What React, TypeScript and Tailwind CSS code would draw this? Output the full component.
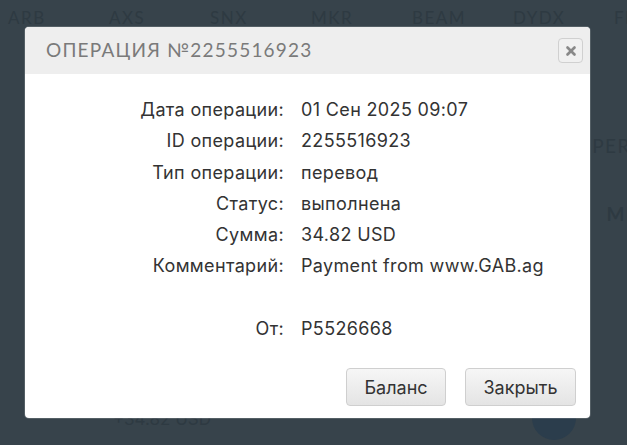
import { X } from "lucide-react";

const rows: [string, string][] = [
  ["Дата операции:", "01 Сен 2025 09:07"],
  ["ID операции:", "2255516923"],
  ["Тип операции:", "перевод"],
  ["Статус:", "выполнена"],
  ["Сумма:", "34.82 USD"],
  ["Комментарий:", "Payment from www.GAB.ag"],
  ["", ""],
  ["От:", "P5526668"],
];

const tickers = ["ARB", "AXS", "SNX", "MKR", "BEAM", "DYDX", "FE"];

export default function App() {
  return (
    <div className="relative w-[627px] h-[445px] overflow-hidden bg-[#37434b] font-['Inter','Liberation_Sans',sans-serif]">
      {/* page behind the overlay */}
      <div className="flex flex-col h-full text-[#2e3a42]">
        <div className="flex pl-[8px] pt-[5px] text-[17px] tracking-[1.5px] font-['Lato',sans-serif]">
          {tickers.map((t) => (
            <span key={t} className="w-[101px] shrink-0">{t}</span>
          ))}
        </div>
        <div className="flex justify-end pt-[101px] text-[19px] tracking-[1.5px] font-['Lato',sans-serif]">
          <span className="-mr-[4px]">PER</span>
        </div>
        <div className="flex justify-end pt-[40px] text-[19px] tracking-[1.5px] font-['Lato',sans-serif]">
          <span className="-mr-[6px] font-bold">MI</span>
        </div>
        <div className="mt-auto flex items-end justify-between pl-[113px] pr-[51px] pb-[5px]">
          <span className="text-[17px] mb-[8px]">+34.82 USD</span>
          <div className="w-[44px] h-[44px] rounded-full bg-[#2b3d4c]" />
        </div>
      </div>

      {/* modal */}
      <div className="absolute left-[25px] top-[27px] w-[565px] h-[391px] bg-white rounded-[4px] overflow-hidden flex flex-col shadow-[0_0_0_1px_rgba(255,255,255,0.15)]">
        <div className="h-[47px] bg-[#eeeeee] flex items-center justify-between pl-[21px] pr-[7px]">
          <span className="text-[19px] text-[#7a7a7a] tracking-[1.2px] font-['Lato',sans-serif]">
            ОПЕРАЦИЯ №2255516923
          </span>
          <button className="w-[25px] h-[25px] rounded-[4px] border border-[#d0d0d0] bg-[#f0f0f0] flex items-center justify-center">
            <X size={14} strokeWidth={4.5} className="text-[#888]" />
          </button>
        </div>
        <div className="grid grid-cols-[259px_1fr] gap-x-[17px] pt-[20px] text-[18px] tracking-[0.35px] text-[#333] leading-[31.3px]">
          {rows.map(([k, v], i) => (
            <div key={i} className="contents">
              <span className="text-right h-[31.3px]">{k}</span>
              <span className="h-[31.3px]">{v}</span>
            </div>
          ))}
        </div>
        <div className="mt-auto flex justify-end gap-[19px] pr-[14px] pb-[12px]">
          <button className="w-[100px] h-[38px] rounded-[4px] border border-[#cfcfcf] bg-gradient-to-b from-[#f6f6f6] to-[#e4e4e4] text-[18px] text-[#333]">
            Баланс
          </button>
          <button className="w-[111px] h-[38px] rounded-[4px] border border-[#cfcfcf] bg-gradient-to-b from-[#f6f6f6] to-[#e4e4e4] text-[18px] text-[#333]">
            Закрыть
          </button>
        </div>
      </div>
    </div>
  );
}
